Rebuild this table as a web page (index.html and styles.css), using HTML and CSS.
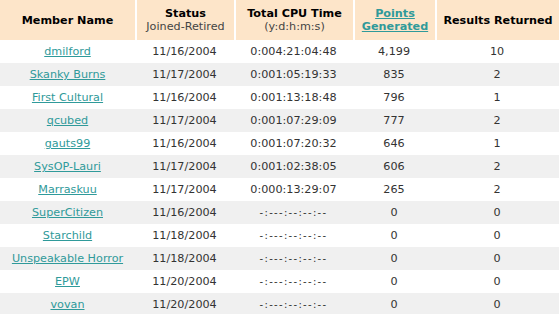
FILE: index.html
```html
<!DOCTYPE html>
<html>
<head>
<meta charset="utf-8">
<link rel="stylesheet" href="styles.css">
</head>
<body>
<table class="stats">
  <colgroup>
    <col class="c1"><col class="c2"><col class="c3"><col class="c4"><col class="c5">
  </colgroup>
  <thead>
    <tr>
      <th>Member Name</th>
      <th>Status<br><span class="sub">Joined-Retired</span></th>
      <th>Total CPU Time<br><span class="sub">(y:d:h:m:s)</span></th>
      <th><a href="#">Points<br>Generated</a></th>
      <th>Results Returned</th>
    </tr>
  </thead>
  <tbody>
    <tr><td><a href="#">dmilford</a></td><td>11/16/2004</td><td>0:004:21:04:48</td><td>4,199</td><td>10</td></tr>
    <tr class="alt"><td><a href="#">Skanky Burns</a></td><td>11/17/2004</td><td>0:001:05:19:33</td><td>835</td><td>2</td></tr>
    <tr><td><a href="#">First Cultural</a></td><td>11/16/2004</td><td>0:001:13:18:48</td><td>796</td><td>1</td></tr>
    <tr class="alt"><td><a href="#">qcubed</a></td><td>11/17/2004</td><td>0:001:07:29:09</td><td>777</td><td>2</td></tr>
    <tr><td><a href="#">gauts99</a></td><td>11/16/2004</td><td>0:001:07:20:32</td><td>646</td><td>1</td></tr>
    <tr class="alt"><td><a href="#">SysOP-Lauri</a></td><td>11/17/2004</td><td>0:001:02:38:05</td><td>606</td><td>2</td></tr>
    <tr><td><a href="#">Marraskuu</a></td><td>11/17/2004</td><td>0:000:13:29:07</td><td>265</td><td>2</td></tr>
    <tr class="alt"><td><a href="#">SuperCitizen</a></td><td>11/16/2004</td><td class="none">-:---:--:--:--</td><td>0</td><td>0</td></tr>
    <tr><td><a href="#">Starchild</a></td><td>11/18/2004</td><td class="none">-:---:--:--:--</td><td>0</td><td>0</td></tr>
    <tr class="alt"><td><a href="#">Unspeakable Horror</a></td><td>11/18/2004</td><td class="none">-:---:--:--:--</td><td>0</td><td>0</td></tr>
    <tr><td><a href="#">EPW</a></td><td>11/20/2004</td><td class="none">-:---:--:--:--</td><td>0</td><td>0</td></tr>
    <tr class="alt"><td><a href="#">vovan</a></td><td>11/20/2004</td><td class="none">-:---:--:--:--</td><td>0</td><td>0</td></tr>
  </tbody>
</table>
</body>
</html>
```
FILE: styles.css
```css
html, body {
  margin: 0;
  padding: 0;
  background: #ffffff;
}
body {
  font-family: "DejaVu Sans", Verdana, sans-serif;
  font-size: 11.2px;
  color: #333333;
}
.stats {
  width: 559px;
  table-layout: fixed;
  border-collapse: separate;
  border-spacing: 0;
}
.c1 { width: 135px; }
.c2 { width: 99px; }
.c3 { width: 119px; }
.c4 { width: 82px; }
.c5 { width: 124px; }
.stats th {
  background: #fde5c9;
  height: 40px;
  padding: 0;
  text-align: center;
  vertical-align: middle;
  font-weight: bold;
  color: #000000;
  line-height: 13px;
  border-left: 2px solid #ffffff;
}
.stats th:first-child {
  border-left: none;
}
.stats th .sub {
  font-weight: normal;
  color: #444444;
}
.stats th a {
  color: #2f9a9a;
  text-decoration: underline;
}
.stats td {
  height: 23px;
  padding: 0;
  text-align: center;
  vertical-align: middle;
  white-space: nowrap;
}
.stats tr.alt td {
  background: #f0f0f0;
}
.stats td a {
  color: #2f9a9a;
  text-decoration: underline;
}
.stats td.none {
  font-size: 10px;
  letter-spacing: 1.3px;
}
```
